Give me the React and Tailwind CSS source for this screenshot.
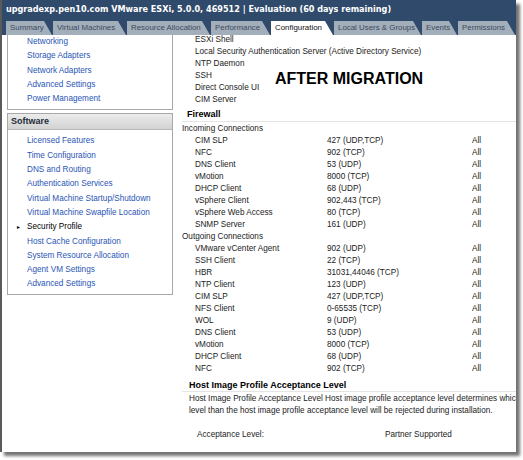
import React from 'react';

const tabs = [
  ['Summary', 46],
  ['Virtual Machines', 73],
  ['Resource Allocation', 83],
  ['Performance', 59],
  ['Configuration', 62],
  ['Local Users & Groups', 87],
  ['Events', 35],
  ['Permissions', 57],
];

const hardware = ['Networking', 'Storage Adapters', 'Network Adapters', 'Advanced Settings', 'Power Management'];

const software = [
  'Licensed Features',
  'Time Configuration',
  'DNS and Routing',
  'Authentication Services',
  'Virtual Machine Startup/Shutdown',
  'Virtual Machine Swapfile Location',
  'Security Profile',
  'Host Cache Configuration',
  'System Resource Allocation',
  'Agent VM Settings',
  'Advanced Settings',
];

const services = ['ESXi Shell', 'Local Security Authentication Server (Active Directory Service)', 'NTP Daemon', 'SSH', 'Direct Console UI', 'CIM Server'];

const incoming = [
  ['CIM SLP', '427 (UDP,TCP)'],
  ['NFC', '902 (TCP)'],
  ['DNS Client', '53 (UDP)'],
  ['vMotion', '8000 (TCP)'],
  ['DHCP Client', '68 (UDP)'],
  ['vSphere Client', '902,443 (TCP)'],
  ['vSphere Web Access', '80 (TCP)'],
  ['SNMP Server', '161 (UDP)'],
];

const outgoing = [
  ['VMware vCenter Agent', '902 (UDP)'],
  ['SSH Client', '22 (TCP)'],
  ['HBR', '31031,44046 (TCP)'],
  ['NTP Client', '123 (UDP)'],
  ['CIM SLP', '427 (UDP,TCP)'],
  ['NFS Client', '0-65535 (TCP)'],
  ['WOL', '9 (UDP)'],
  ['DNS Client', '53 (UDP)'],
  ['vMotion', '8000 (TCP)'],
  ['DHCP Client', '68 (UDP)'],
  ['NFC', '902 (TCP)'],
];

function Tab({ label, width }) {
  const active = label === 'Configuration';
  return (
    <div
      style={{ width }}
      className={`h-[14px] pl-[4px] mr-[1px] shrink-0 flex items-center leading-none text-[7.9px] [clip-path:polygon(0_0,calc(100%-8px)_0,100%_100%,0_100%)] ${
        active ? 'bg-white text-[#111]' : 'bg-[#a3aebb] text-[#3c4a5c]'
      }`}
    >
      {label}
    </div>
  );
}

function FirewallRow({ name, port }) {
  return (
    <div className="flex h-[12px] items-center whitespace-nowrap">
      <span className="w-[145px] pl-[13px]">{name}</span>
      <span className="w-[145px]">{port}</span>
      <span>All</span>
    </div>
  );
}

export default function App() {
  return (
    <div className="w-[523px] h-[460px] bg-white overflow-hidden text-[8.2px] text-[#222]" style={{ fontFamily: '"Liberation Sans", Arial, sans-serif' }}>
      <div className="w-[516px] h-[452px] flex flex-col border-l-2 border-[#5a5a5a] shadow-[4px_4px_3px_rgba(0,0,0,0.55)] bg-white overflow-hidden">
        {/* title + tab strip */}
        <div className="bg-[#2f4a6a] text-white">
          <div className="h-[19px] pl-[4px] flex items-center font-bold text-[9px] whitespace-nowrap" style={{ fontFamily: '"DejaVu Sans Condensed", "DejaVu Sans", sans-serif' }}>
            upgradexp.pen10.com VMware ESXi, 5.0.0, 469512 | Evaluation (60 days remaining)
          </div>
          <div className="h-[16px] pl-[4px] flex items-end whitespace-nowrap">
            {tabs.map(([t, w]) => (
              <Tab key={t} label={t} width={w} />
            ))}
          </div>
        </div>

        <div className="flex flex-1 min-h-0">
          {/* left panel */}
          <div className="w-[180px] pl-[5px] pr-[9px] shrink-0">
            <div className="border border-t-0 border-[#a8a8a8] pl-[19px] pb-[3px]">
              {hardware.map(h => (
                <div key={h} className="h-[14.3px] flex items-center text-[#2a55b5]">{h}</div>
              ))}
            </div>
            <div className="mt-[3px] border border-[#a8a8a8]">
              <div className="h-[16px] px-[3px] flex items-center font-bold text-[9px] text-[#1e2a3a] bg-gradient-to-b from-[#ececec] to-[#d2d2d2] border-b border-[#b8b8b8]">
                Software
              </div>
              <div className="pt-[4px] pb-[2px]">
                {software.map(s => (
                  <div key={s} className="h-[14.3px] flex items-center whitespace-nowrap">
                    <span className="w-[19px] pl-[9px] text-[6px] text-black">{s === 'Security Profile' ? '▸' : ''}</span>
                    <span className={s === 'Security Profile' ? 'text-black' : 'text-[#2a55b5]'}>{s}</span>
                  </div>
                ))}
              </div>
            </div>
          </div>

          {/* right panel */}
          <div className="flex-1 min-w-0 overflow-hidden relative">
            <div className="pl-[13px] -mt-[1px]">
              {services.map(s => (
                <div key={s} className="h-[12px] flex items-center whitespace-nowrap">{s}</div>
              ))}
            </div>
            <div className="absolute left-[93px] top-[32px] font-bold text-[16px] text-black">
              AFTER MIGRATION
            </div>

            <div className="mt-[3px] pl-[5px] font-bold text-[9px] text-black h-[13px] flex items-center border-b border-[#e4e4e4]">Firewall</div>
            <div className="mt-[1px]">
              <div className="h-[12px] flex items-center">Incoming Connections</div>
              {incoming.map(([n, p], i) => (
                <FirewallRow key={'i' + i} name={n} port={p} />
              ))}
              <div className="h-[12px] flex items-center">Outgoing Connections</div>
              {outgoing.map(([n, p], i) => (
                <FirewallRow key={'o' + i} name={n} port={p} />
              ))}
            </div>

            <div className="mt-[5px] pl-[7px] font-bold text-[9px] text-black h-[12px] flex items-center border-b border-[#e4e4e4]">
              Host Image Profile Acceptance Level
            </div>
            <div className="pl-[7px] pt-[1px] leading-[12px] whitespace-nowrap">
              <div>Host Image Profile Acceptance Level Host image profile acceptance level determines which VIBs</div>
              <div>level than the host image profile acceptance level will be rejected during installation.</div>
            </div>
            <div className="mt-[12px] flex h-[12px] items-center">
              <span className="w-[203px] pl-[15px]">Acceptance Level:</span>
              <span>Partner Supported</span>
            </div>
          </div>
        </div>
      </div>
    </div>
  );
}
